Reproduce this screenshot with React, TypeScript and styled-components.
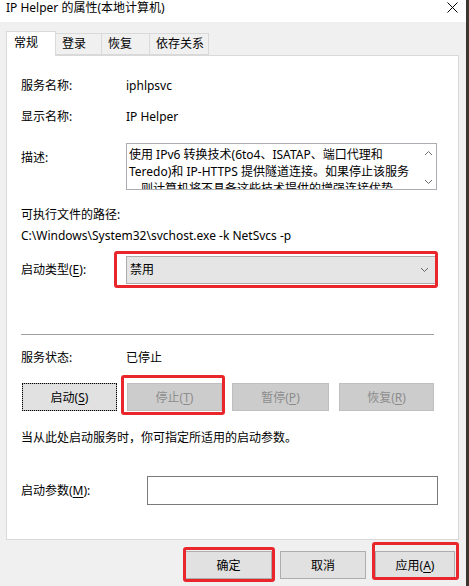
import React from "react";
import styled, { createGlobalStyle } from "styled-components";

const Global = createGlobalStyle`
  html, body { margin: 0; padding: 0; background: #f0f0f0; }
  * { box-sizing: border-box; }
  body {
    font-family: "Segoe UI", "Noto Sans", "Noto Sans CJK SC", sans-serif;
    font-size: 12px;
    color: #000;
  }
`;

const Window = styled.div`
  width: 469px;
  height: 586px;
  background: #f0f0f0;
  border-right: 3px solid #3d3530;
  display: flex;
  flex-direction: column;
  overflow: hidden;
`;

const TitleBar = styled.div`
  height: 22px;
  background: #fff;
  display: flex;
  align-items: flex-start;
  justify-content: space-between;
  padding: 0 8px 0 6px;
  line-height: 16px;
  font-size: 12px;
`;

const CloseX = styled.span`
  display: flex;
  margin-top: 2px;
`;

const TabRow = styled.div`
  display: flex;
  align-items: flex-end;
  margin: 9px 0 0 6px;
  position: relative;
  z-index: 1;
`;

const Tab = styled.div<{ $active?: boolean; $w: number }>`
  width: ${(p) => p.$w}px;
  height: ${(p) => (p.$active ? 25 : 22)}px;
  background: ${(p) => (p.$active ? "#fff" : "#f0f0f0")};
  border: 1px solid #d9d9d9;
  border-bottom: ${(p) => (p.$active ? "none" : "1px solid #d9d9d9")};
  margin-left: ${(p) => (p.$active ? 0 : -1)}px;
  padding-left: ${(p) => (p.$active ? 7 : 6)}px;
  padding-top: ${(p) => (p.$active ? 3 : 2)}px;
  line-height: 16px;
  font-size: 12px;
  margin-bottom: ${(p) => (p.$active ? -1 : 0)}px;
`;

const Panel = styled.div`
  margin: 0 7px 0 6px;
  height: 485px;
  background: #fff;
  border: 1px solid #d9d9d9;
  padding: 22px 14px 0 14px;
  display: flex;
  flex-direction: column;
`;

const Row = styled.div<{ $mt: number }>`
  display: flex;
  align-items: flex-start;
  margin-top: ${(p) => p.$mt}px;
  line-height: 16px;
`;

const Label = styled.div<{ $w?: number; $mt?: number }>`
  width: ${(p) => p.$w ?? 105}px;
  flex: none;
  margin-top: ${(p) => p.$mt ?? 0}px;
  line-height: 16px;
`;

const Value = styled.div`
  line-height: 16px;
`;

const DescBox = styled.div`
  width: 311px;
  height: 47px;
  border: 1px solid #abadb3;
  display: flex;
  overflow: hidden;
`;

const DescText = styled.div`
  flex: 1;
  padding: 2px 0 0 2px;
  line-height: 17px;
  font-size: 12px;
  overflow: hidden;
`;

const ScrollBar = styled.div`
  width: 16px;
  display: flex;
  flex-direction: column;
  justify-content: space-between;
  align-items: center;
  padding: 6px 0 4px;
  background: #fff;
  color: #707070;
`;

const Combo = styled.div`
  width: 310px;
  height: 28px;
  background: #e5e5e5;
  border: 1px solid #acacac;
  display: flex;
  align-items: center;
  justify-content: space-between;
  padding: 0 6px 0 3px;
  color: #000;
`;

const ComboArrow = styled.span`
  display: flex;
  color: #666;
`;

const Highlight = styled.div<{ $t: number; $r: number; $b: number; $l: number }>`
  position: relative;
  display: inline-flex;
  &::after {
    content: "";
    position: absolute;
    top: ${(p) => -p.$t}px;
    right: ${(p) => -p.$r}px;
    bottom: ${(p) => -p.$b}px;
    left: ${(p) => -p.$l}px;
    border: 3px solid #e8262b;
    border-radius: 3px;
    pointer-events: none;
  }
`;

const Separator = styled.div`
  height: 1px;
  background: #a0a0a0;
  margin: 50px 10px 0 0;
`;

const ButtonRow = styled.div`
  display: grid;
  grid-template-columns: 95px 95px 97px 95px;
  column-gap: 10px;
  margin: 17px 0 0 1px;
`;

const Btn = styled.div<{ $disabled?: boolean; $focus?: boolean; $w?: number }>`
  height: 28px;
  width: ${(p) => (p.$w ? `${p.$w}px` : "100%")};
  background: ${(p) => (p.$disabled ? "#cccccc" : "#e1e1e1")};
  border: 1px solid ${(p) => (p.$disabled ? "#bfbfbf" : "#adadad")};
  color: ${(p) => (p.$disabled ? "#8d8d8d" : "#000")};
  display: flex;
  align-items: center;
  justify-content: center;
  font-size: 12px;
  ${(p) => (p.$focus ? "outline: 1px dotted #000; outline-offset: -1px;" : "")}
`;

const U = styled.span`
  text-decoration: underline;
  text-underline-offset: 2px;
`;

const Input = styled.div`
  width: 291px;
  height: 29px;
  border: 1px solid #7a7a7a;
  background: #fff;
  margin-left: 21px;
`;

const Footer = styled.div`
  display: flex;
  justify-content: flex-end;
  align-items: center;
  padding: 11px 11px 0 0;
`;

const FooterGap = styled.div<{ $w: number }>`
  width: ${(p) => p.$w}px;
`;

const Chevron = ({ up }: { up?: boolean }) => (
  <svg width="9" height="6" viewBox="0 0 9 6" fill="none" stroke="currentColor" strokeWidth="1">
    {up ? <path d="M1 5 L4.5 1.5 L8 5" /> : <path d="M1 1 L4.5 4.5 L8 1" />}
  </svg>
);

export default function App() {
  return (
    <>
      <Global />
      <Window>
        <TitleBar>
          <span>IP Helper 的属性(本地计算机)</span>
          <CloseX>
            <svg width="11" height="11" viewBox="0 0 11 11" stroke="#000" strokeWidth="1">
              <path d="M0.5 0.5 L10.5 10.5 M10.5 0.5 L0.5 10.5" />
            </svg>
          </CloseX>
        </TitleBar>
        <TabRow>
          <Tab $active $w={50}>常规</Tab>
          <Tab $w={47}>登录</Tab>
          <Tab $w={49}>恢复</Tab>
          <Tab $w={60}>依存关系</Tab>
        </TabRow>
        <Panel>
          <Row $mt={0}>
            <Label>服务名称:</Label>
            <Value>iphlpsvc</Value>
          </Row>
          <Row $mt={15}>
            <Label>显示名称:</Label>
            <Value>IP Helper</Value>
          </Row>
          <Row $mt={18}>
            <Label $mt={7}>描述:</Label>
            <DescBox>
              <DescText>
                使用 IPv6 转换技术(6to4、ISATAP、端口代理和
                <br />
                Teredo)和 IP-HTTPS 提供隧道连接。如果停止该服务
                <br />
                ，则计算机将不具备这些技术提供的增强连接优势。
              </DescText>
              <ScrollBar>
                <Chevron up />
                <Chevron />
              </ScrollBar>
            </DescBox>
          </Row>
          <Row $mt={17}>
            <Value>可执行文件的路径:</Value>
          </Row>
          <Row $mt={5}>
            <Value>C:\Windows\System32\svchost.exe -k NetSvcs -p</Value>
          </Row>
          <Row $mt={12}>
            <Label $mt={6}>
              启动类型(<U>E</U>):
            </Label>
            <Highlight $t={5} $r={2} $b={4} $l={12}>
              <Combo>
                <span>禁用</span>
                <ComboArrow>
                  <Chevron />
                </ComboArrow>
              </Combo>
            </Highlight>
          </Row>
          <Separator />
          <Row $mt={15}>
            <Label>服务状态:</Label>
            <Value>已停止</Value>
          </Row>
          <ButtonRow>
            <Btn $focus>
              启动(<U>S</U>)
            </Btn>
            <Highlight $t={8} $r={3} $b={4} $l={6}>
              <Btn $disabled>
                停止(<U>T</U>)
              </Btn>
            </Highlight>
            <Btn $disabled>
              暂停(<U>P</U>)
            </Btn>
            <Btn $disabled>
              恢复(<U>R</U>)
            </Btn>
          </ButtonRow>
          <Row $mt={19}>
            <Value>当从此处启动服务时，你可指定所适用的启动参数。</Value>
          </Row>
          <Row $mt={30}>
            <Label $mt={7} $w={105}>
              启动参数(<U>M</U>):
            </Label>
            <Input />
          </Row>
        </Panel>
        <Footer>
          <Highlight $t={4} $r={3} $b={3} $l={2}>
            <Btn $w={87}>确定</Btn>
          </Highlight>
          <FooterGap $w={8} />
          <Btn $w={86}>取消</Btn>
          <FooterGap $w={9} />
          <Highlight $t={9} $r={4} $b={1} $l={3}>
            <Btn $w={80}>
              应用(<U>A</U>)
            </Btn>
          </Highlight>
        </Footer>
      </Window>
    </>
  );
}
